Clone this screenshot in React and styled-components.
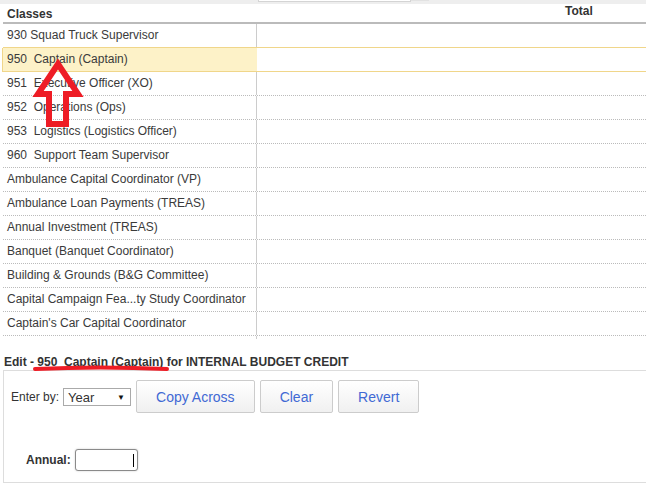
import React from 'react';
import styled, { createGlobalStyle } from 'styled-components';

const GlobalStyle = createGlobalStyle`
    body {
        margin: 0;
        background: #fff;
        font-family: "Liberation Sans", Arial, sans-serif;
        font-size: 12px;
        color: #333;
    }
`;

const Page = styled.div`
    position: relative;
    width: 646px;
    height: 486px;
    overflow: hidden;
`;

const TopStrip = styled.div`
    height: 4px;
    background: #eee;
    display: flex;
    padding-left: 258px;
`;

const CutSearch = styled.div`
    width: 151px;
    height: 1px;
    background: #fff;
    border: 1px solid #d4d4d4;
    border-top: none;
`;

const CutButton = styled.div`
    width: 18px;
    height: 1px;
    background: #e2e2e2;
`;

const Grid = styled.div`
    display: grid;
    grid-template-columns: 254px 1fr;
    margin-left: 3px;
`;

const HeadRow = styled(Grid)`
    height: 18px;
    border-bottom: 2px solid #bbb;
`;

const HeadCell = styled.div`
    font-weight: bold;
    color: #333;
    padding: ${p => (p.$right ? '0 0 0 308px' : '2px 0 0 4px')};
    line-height: ${p => (p.$right ? '14px' : '16px')};
`;

const Row = styled(Grid)`
    height: 23px;
    border-bottom: 1px ${p => (p.$selected ? 'solid #f0d68a' : 'dotted #bbb')};
    box-shadow: ${p => (p.$selected ? '0 -1px 0 #f0d68a, -1px 0 0 #f0d68a' : 'none')};
    position: relative;
`;

const NameCell = styled.div`
    padding-left: 4px;
    line-height: 23px;
    white-space: pre;
    color: #3a3a3a;
    background: ${p => (p.$selected ? '#fdf2c8' : 'transparent')};
    border-right: 1px solid ${p => (p.$selected ? '#fdf2c8' : '#ccc')};
`;

const Tail = styled(Grid)`
    height: 3px;
`;

const TailCell = styled.div`
    border-right: 1px solid #ccc;
`;

const EditTitle = styled.div`
    margin: 16px 0 0 4px;
    font-weight: bold;
    color: #333;
    line-height: 15px;
    white-space: pre;
`;

const EditBox = styled.div`
    margin: 0 0 0 3px;
    height: 113px;
    border: 1px solid #ddd;
    border-right: none;
    padding: 9px 0 0 7px;
    box-sizing: border-box;
`;

const Controls = styled.div`
    display: flex;
    align-items: center;
    gap: 5px;
`;

const Label = styled.span`
    color: #333;
    font-weight: ${p => (p.$bold ? 'bold' : 'normal')};
`;

const SelectBox = styled.div`
    width: 57px;
    height: 16px;
    border: 1px solid #aaa;
    background: #fff;
    display: flex;
    align-items: center;
    justify-content: space-between;
    padding: 0 5px 0 4px;
    margin: 1px 0 0 -1px;
    font-size: 13px;
    color: #333;
`;

const Caret = styled.span`
    font-size: 8px;
    color: #111;
`;

const Button = styled.button`
    height: 33px;
    padding: 0 ${p => p.$pad}px;
    border: 1px solid #ccc;
    border-radius: 2px;
    background: linear-gradient(#fff, #f0f0f0);
    color: #4169d4;
    font-family: "Liberation Sans", Arial, sans-serif;
    font-size: 14px;
    cursor: pointer;
`;

const AnnualRow = styled.div`
    display: flex;
    align-items: center;
    gap: 4px;
    margin: 36px 0 0 15px;
`;

const InputWrap = styled.div`
    position: relative;
`;

const Input = styled.input`
    width: 63px;
    height: 22px;
    box-sizing: border-box;
    border: 1px solid #8a8a8a;
    border-radius: 3px;
    box-shadow: 0 0 2px #c8c8c8;
    outline: none;
    text-align: right;
    font-family: "Liberation Sans", Arial, sans-serif;
    font-size: 12px;
`;

const TextCursor = styled.span`
    position: absolute;
    right: 4px;
    top: 5px;
    width: 1px;
    height: 13px;
    background: #000;
`;

const Marks = styled.svg`
    position: absolute;
    left: 0;
    top: 0;
    pointer-events: none;
`;

const classes = [
    '930 Squad Truck Supervisor',
    '950  Captain (Captain)',
    '951  Executive Officer (XO)',
    '952  Operations (Ops)',
    '953  Logistics (Logistics Officer)',
    '960  Support Team Supervisor',
    'Ambulance Capital Coordinator (VP)',
    'Ambulance Loan Payments (TREAS)',
    'Annual Investment (TREAS)',
    'Banquet (Banquet Coordinator)',
    'Building & Grounds (B&G Committee)',
    'Capital Campaign Fea...ty Study Coordinator',
    "Captain's Car Capital Coordinator",
];

const App = () => {
    return (
        <Page>
            <GlobalStyle />
            <TopStrip>
                <CutSearch />
                <CutButton />
            </TopStrip>
            <HeadRow>
                <HeadCell>Classes</HeadCell>
                <HeadCell $right>Total</HeadCell>
            </HeadRow>
            {classes.map((name, i) => (
                <Row key={name} $selected={i === 1}>
                    <NameCell $selected={i === 1}>{name}</NameCell>
                    <div />
                </Row>
            ))}
            <Tail>
                <TailCell />
            </Tail>

            <EditTitle>Edit - 950  Captain (Captain) for INTERNAL BUDGET CREDIT</EditTitle>
            <EditBox>
                <Controls>
                    <Label>Enter by:</Label>
                    <SelectBox>
                        Year
                        <Caret>▼</Caret>
                    </SelectBox>
                    <Button $pad={19}>Copy Across</Button>
                    <Button $pad={19}>Clear</Button>
                    <Button $pad={19}>Revert</Button>
                </Controls>
                <AnnualRow>
                    <Label $bold>Annual:</Label>
                    <InputWrap>
                        <Input type="text" />
                        <TextCursor />
                    </InputWrap>
                </AnnualRow>
            </EditBox>

            {/* red annotation marks drawn over the page */}
            <Marks width="646" height="486">
                <path
                    d="M58 64 L38 94 L49 94 L49 124 L66 124 L66 94 L78 94 Z"
                    fill="none"
                    stroke="#ee1c25"
                    strokeWidth="6"
                    strokeLinejoin="miter"
                />
                <path
                    d="M35 369 Q100 366 167 369"
                    fill="none"
                    stroke="#ee1c25"
                    strokeWidth="4"
                    strokeLinecap="round"
                />
            </Marks>
        </Page>
    );
};

export default App;
